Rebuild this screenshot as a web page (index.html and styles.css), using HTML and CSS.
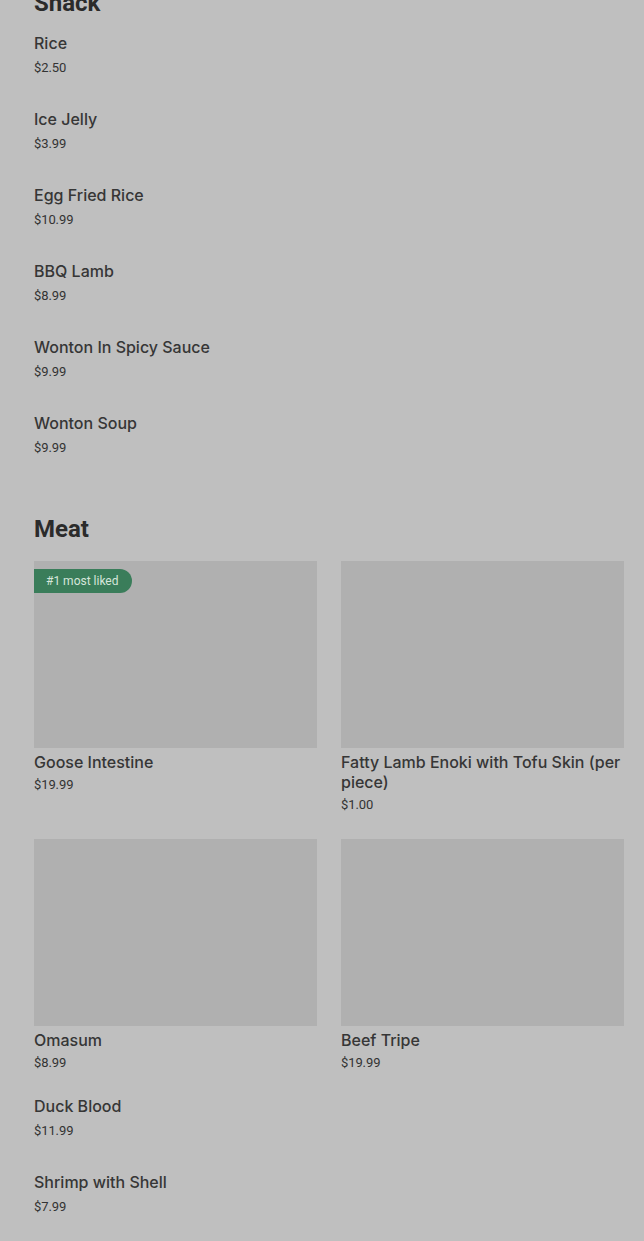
FILE: index.html
```html
<!DOCTYPE html>
<html lang="en">
<head>
  <meta charset="UTF-8">
  <meta name="viewport" content="width=device-width, initial-scale=1.0">
  <title>Menu</title>
  <link rel="stylesheet" href="styles.css">
</head>
<body>
  <div class="menu">
    <!-- Snack section, page is scrolled so heading is cut off -->
    <section class="section section-snack">
      <h2 class="section-title">Snack</h2>
      <ul class="item-list">
        <li class="item"><div class="item-name">Rice</div><div class="item-price">$2.50</div></li>
        <li class="item"><div class="item-name">Ice Jelly</div><div class="item-price">$3.99</div></li>
        <li class="item"><div class="item-name">Egg Fried Rice</div><div class="item-price">$10.99</div></li>
        <li class="item"><div class="item-name">BBQ Lamb</div><div class="item-price">$8.99</div></li>
        <li class="item"><div class="item-name">Wonton In Spicy Sauce</div><div class="item-price">$9.99</div></li>
        <li class="item"><div class="item-name">Wonton Soup</div><div class="item-price">$9.99</div></li>
      </ul>
    </section>

    <section class="section section-meat">
      <h2 class="section-title">Meat</h2>
      <div class="item-grid">
        <div class="card">
          <div class="card-image">
            <span class="badge">#1 most liked</span>
          </div>
          <div class="card-name">Goose Intestine</div>
          <div class="card-price">$19.99</div>
        </div>
        <div class="card">
          <div class="card-image"></div>
          <div class="card-name">Fatty Lamb Enoki with Tofu Skin (per piece)</div>
          <div class="card-price">$1.00</div>
        </div>
        <div class="card">
          <div class="card-image"></div>
          <div class="card-name">Omasum</div>
          <div class="card-price">$8.99</div>
        </div>
        <div class="card">
          <div class="card-image"></div>
          <div class="card-name">Beef Tripe</div>
          <div class="card-price">$19.99</div>
        </div>
      </div>
      <ul class="item-list item-list-after">
        <li class="item"><div class="item-name">Duck Blood</div><div class="item-price">$11.99</div></li>
        <li class="item"><div class="item-name">Shrimp with Shell</div><div class="item-price">$7.99</div></li>
      </ul>
    </section>
  </div>
</body>
</html>
```

FILE: styles.css
```css
/* Menu page, dimmed behind an overlay */
body {
  margin: 0;
  background-color: #bfbfbf;
  font-family: Roboto, "Liberation Sans", Arial, sans-serif;
  color: #2e2e2e;
  overflow: hidden;
}

.menu {
  padding: 0 20px 0 34px;
  margin-top: -12px;
}

.section-title {
  margin: 0;
  font-size: 24px;
  line-height: 30px;
  font-weight: 700;
  color: #2b2b2b;
}

.section-meat {
  margin-top: 57px;
}

.item-list {
  list-style: none;
  margin: 14px 0 0;
  padding: 0;
  display: flex;
  flex-direction: column;
  gap: 31px;
}

.item-list-after {
  margin-top: 23px;
}

.item-name,
.card-name {
  font-family: Inter, Roboto, sans-serif;
  font-size: 16px;
  font-weight: 500;
  color: #363636;
}

.item-name {
  line-height: 22px;
}

.item-price,
.card-price {
  margin-top: 5px;
  font-size: 13px;
  line-height: 18px;
  color: #333;
  letter-spacing: -0.1px;
}

.item-grid {
  margin-top: 17px;
  display: grid;
  grid-template-columns: 283px 283px;
  column-gap: 24px;
  row-gap: 25px;
}

.card-image {
  position: relative;
  height: 187px;
  background-color: #b0b0b0;
}

.card-name {
  margin-top: 4px;
  line-height: 20px;
}

.card-price {
  margin-top: 4px;
}

/* Badge over the first picture */
.badge {
  position: absolute;
  top: 8px;
  left: 0;
  height: 24px;
  line-height: 24px;
  padding: 0 13px 0 12px;
  font-size: 12px;
  color: #d6e6da;
  background-color: #3a7d5a;
  border-radius: 0 12px 12px 0;
}
```
